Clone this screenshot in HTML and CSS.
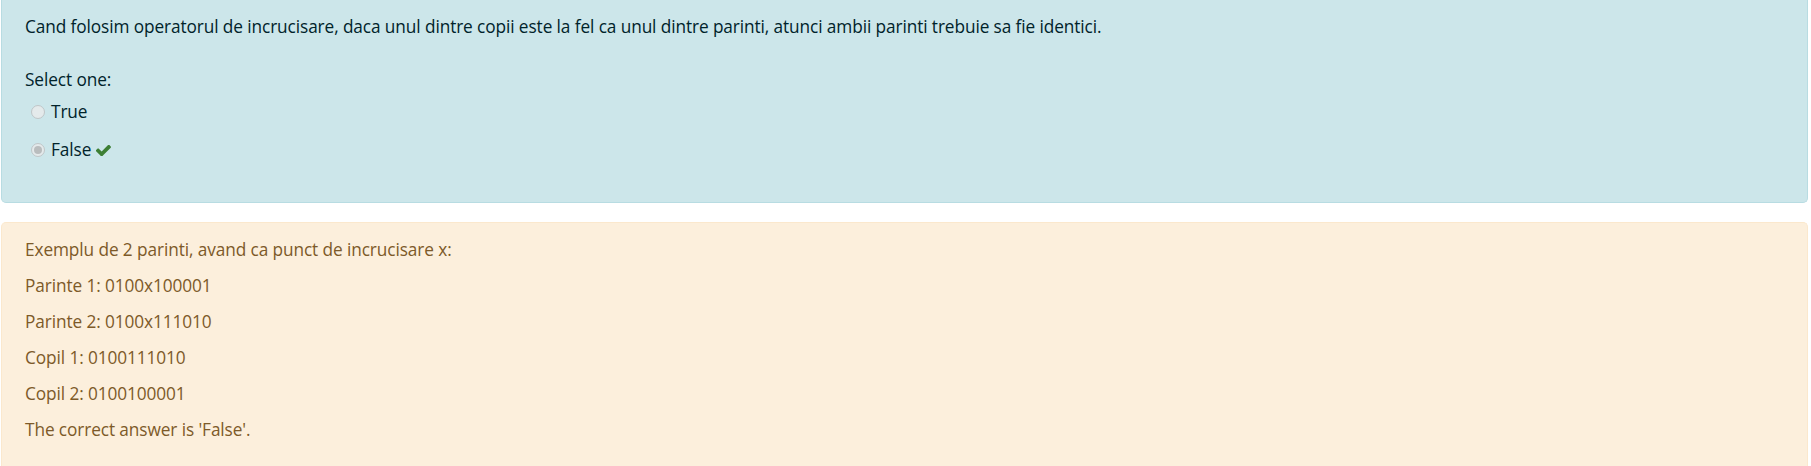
FILE: index.html
```html
<!DOCTYPE html>
<html lang="ro">
<head>
<meta charset="utf-8">
<title>Intrebare</title>
<link rel="stylesheet" href="styles.css">
</head>
<body>
<div class="que">
  <div class="formulation">
    <div class="qtext">Cand folosim operatorul de incrucisare, daca unul dintre copii este la fel ca unul dintre parinti, atunci ambii parinti trebuie sa fie identici.</div>
    <div class="ablock">
      <div class="prompt">Select one:</div>
      <div class="answer">
        <div class="option">
          <span class="radio"></span>
          <span class="label">True</span>
        </div>
        <div class="option">
          <span class="radio checked"></span>
          <span class="label">False</span>
          <svg class="check" viewBox="137 402 1534 1024" width="15" height="11" aria-hidden="true"><path d="M1671 566q0 40-28 68l-724 724-136 136q-28 28-68 28t-68-28l-136-136-362-362q-28-28-28-68t28-68l136-136q28-28 68-28t68 28l294 295 656-657q28-28 68-28t68 28l136 136q28 28 28 68z"/></svg>
        </div>
      </div>
    </div>
  </div>
  <div class="outcome">
    <p>Exemplu de 2 parinti, avand ca punct de incrucisare x:</p>
    <p>Parinte 1: 0100x100001</p>
    <p>Parinte 2: 0100x111010</p>
    <p>Copil 1: 0100111010</p>
    <p>Copil 2: 0100100001</p>
    <p>The correct answer is 'False'.</p>
  </div>
</div>
</body>
</html>
```

FILE: styles.css
```css
html, body {
  margin: 0;
  padding: 0;
  background: #ffffff;
}

body {
  font-family: "Open Sans", "Noto Sans", sans-serif;
  font-size: 17.25px;
  letter-spacing: -0.1px;
  line-height: 28px;
}

.que {
  padding: 0 3px 0 1px;
}

.formulation {
  background: #cce6ea;
  color: #00232a;
  border: 1px solid #b8dce2;
  border-top: none;
  border-radius: 0 0 5px 5px;
  padding: 13px 23px 35px 23px;
  margin-bottom: 19px;
}

.qtext {
  margin-bottom: 28px;
}

.prompt {
  line-height: 22px;
}

.option {
  display: flex;
  align-items: center;
  height: 28px;
  padding: 7px 0 3px 6px;
}

.radio {
  width: 12px;
  height: 12px;
  border-radius: 50%;
  border: 1px solid #bfc6c8;
  background: #e4eaeb;
  margin-right: 6px;
  position: relative;
  flex: none;
}

.radio.checked::after {
  content: "";
  position: absolute;
  left: 2px;
  top: 2px;
  width: 8px;
  height: 8px;
  border-radius: 50%;
  background: #b9bdbe;
}

.check {
  fill: #3d7f34;
  margin-left: 5px;
  flex: none;
}

.outcome {
  background: #fcefdc;
  color: #7d5a29;
  border: 1px solid #fbe8cd;
  border-bottom: none;
  border-radius: 5px 5px 0 0;
  padding: 13px 23px 0 23px;
  height: 230px;
}

.outcome p {
  margin: 0 0 8px 0;
}
```
